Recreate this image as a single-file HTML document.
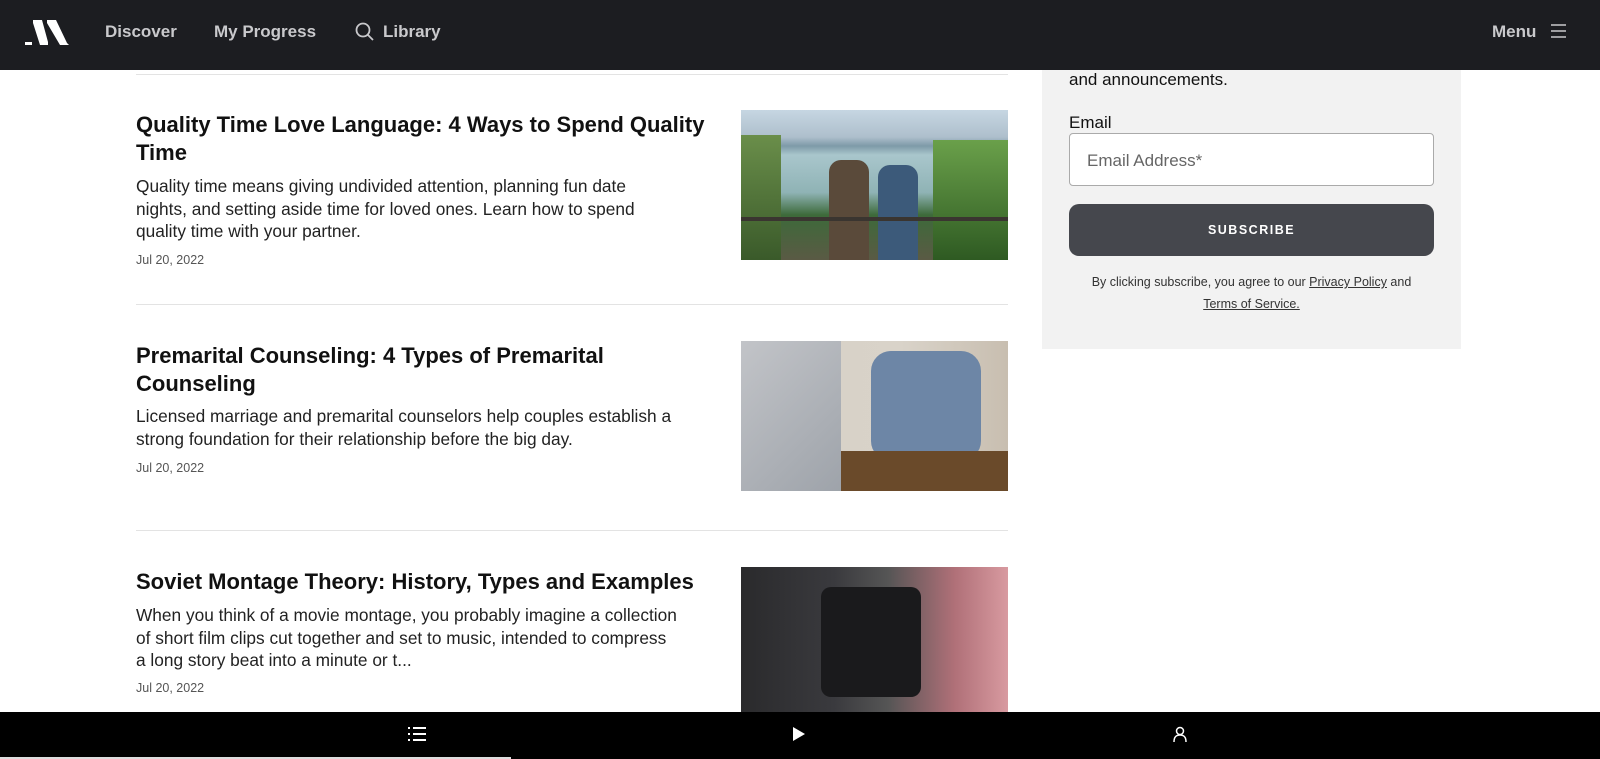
<!DOCTYPE html>
<html><head><meta charset="utf-8"><style>
*{margin:0;padding:0;box-sizing:border-box}
body{width:1600px;height:759px;overflow:hidden;background:#fff;font-family:"Liberation Sans",Arial,sans-serif;color:#191919;position:relative}
.hdr{position:absolute;top:0;left:0;width:1600px;height:70px;background:#1c1d21;color:#c9c9cc;font-weight:bold;font-size:17px}
.hdr span{position:absolute;top:22px}
.line{position:absolute;left:136px;width:872px;height:1px;background:#e3e3e3}
.t{position:absolute;left:136px;width:580px;font-size:22px;font-weight:bold;line-height:28px;color:#111}
.d{position:absolute;left:136px;width:575px;font-size:17.3px;line-height:22.5px;color:#222}
.dt{position:absolute;left:136px;font-size:12.5px;color:#555}
.img{position:absolute;left:741px;width:267px;height:150px}
.side{position:absolute;left:1042px;top:70px;width:419px;height:279px;background:#f2f2f2}
.bb{position:absolute;top:712px;left:0;width:1600px;height:47px;background:#000}
</style></head><body>
<div class="line" style="top:74px"></div>
<div class="t" style="top:111px">Quality Time Love Language: 4 Ways to Spend Quality Time</div>
<div class="d" style="top:175px;width:540px">Quality time means giving undivided attention, planning fun date nights, and setting aside time for loved ones. Learn how to spend quality time with your partner.</div>
<div class="dt" style="top:253px">Jul 20, 2022</div>
<div class="img" style="top:110px;background:linear-gradient(180deg,#c6d6e2 0%,#aebfcc 18%,#7e9aa8 24%,#a9c6cc 30%,#8fb3b5 55%,#3d6a3a 70%,#5a5a44 100%)">
<div style="position:absolute;left:0;top:25px;width:40px;height:125px;background:linear-gradient(#6a8e4a,#3a5a2a)"></div>
<div style="position:absolute;right:0;top:30px;width:75px;height:120px;background:linear-gradient(#6aa04a,#2e5a22)"></div>
<div style="position:absolute;left:88px;top:50px;width:40px;height:100px;background:#5a4a3a;border-radius:12px 12px 0 0"></div>
<div style="position:absolute;left:137px;top:55px;width:40px;height:95px;background:#3c5a7a;border-radius:12px 12px 0 0"></div>
<div style="position:absolute;left:0;top:107px;width:267px;height:4px;background:#3a3530"></div>
</div>
<div class="line" style="top:304px"></div>
<div class="t" style="top:342px">Premarital Counseling: 4 Types of Premarital Counseling</div>
<div class="d" style="top:405px">Licensed marriage and premarital counselors help couples establish a strong foundation for their relationship before the big day.</div>
<div class="dt" style="top:461px">Jul 20, 2022</div>
<div class="img" style="top:341px;background:linear-gradient(90deg,#b3a89a 0%,#d8d2c8 30%,#d9d3c9 60%,#c8beb0 100%)">
<div style="position:absolute;left:0;top:0;width:100px;height:150px;background:linear-gradient(135deg,#c2c4c8,#9ea3aa)"></div>
<div style="position:absolute;left:130px;top:10px;width:110px;height:110px;background:#6d86a6;border-radius:20px"></div>
<div style="position:absolute;left:100px;top:110px;width:167px;height:40px;background:#6a4a2a"></div>
</div>
<div class="line" style="top:530px"></div>
<div class="t" style="top:568px">Soviet Montage Theory: History, Types and Examples</div>
<div class="d" style="top:604px;width:575px">When you think of a movie montage, you probably imagine a collection<br>of short film clips cut together and set to music, intended to compress<br>a long story beat into a minute or t...</div>
<div class="dt" style="top:681px">Jul 20, 2022</div>
<div class="img" style="top:567px;height:145px;background:linear-gradient(90deg,#2a2a2c 0%,#3a3a3e 35%,#555 55%,#b07078 80%,#d89aa0 100%)">
<div style="position:absolute;left:80px;top:20px;width:100px;height:110px;background:#1a1a1c;border-radius:10px"></div>
</div>
<div class="side">
<div style="position:absolute;left:27px;top:0px;font-size:17px;color:#111">and announcements.</div>
<div style="position:absolute;left:27px;top:43px;font-size:17px;color:#111">Email</div>
<div style="position:absolute;left:27px;top:63px;width:365px;height:53px;background:#fff;border:1px solid #aaa;border-radius:4px;font-size:17px;color:#666;padding:17px 0 0 17px">Email Address*</div>
<div style="position:absolute;left:27px;top:134px;width:365px;height:52px;background:#45474d;border-radius:10px;color:#fff;font-weight:bold;font-size:12.5px;letter-spacing:1.5px;text-align:center;line-height:52px">SUBSCRIBE</div>
<div style="position:absolute;left:0;top:201px;width:419px;text-align:center;font-size:12.5px;line-height:22px;color:#333">By clicking subscribe, you agree to our <u>Privacy Policy</u> and<br><u>Terms of Service.</u></div>
</div>
<div class="hdr">
<svg style="position:absolute;left:25px;top:18px" width="46" height="28" viewBox="0 0 46 28"><rect x="0" y="24" width="7" height="3" fill="#fff"/><path d="M8 2h9l6 22v3h-8l-7-22z M22 2h9l11 23 2 2h-9l-13-22z" fill="#fff"/></svg>
<span style="left:105px">Discover</span>
<span style="left:214px">My Progress</span>
<svg style="position:absolute;left:355px;top:22px" width="20" height="20" viewBox="0 0 20 20"><circle cx="8" cy="8" r="6.5" fill="none" stroke="#c9c9cc" stroke-width="1.8"/><path d="M13 13l5 5" stroke="#c9c9cc" stroke-width="1.8"/></svg>
<span style="left:383px">Library</span>
<span style="left:1492px">Menu</span>
<svg style="position:absolute;left:1551px;top:24px" width="15" height="14"><path d="M0 1h15M0 7h15M0 13h15" stroke="#c9c9cc" stroke-width="1.5"/></svg>
</div>
<div class="bb">
<svg style="position:absolute;left:408px;top:15px" width="18" height="14"><path d="M0 1h2M0 7h2M0 13h2M5 1h13M5 7h13M5 13h13" stroke="#fff" stroke-width="2"/></svg>
<svg style="position:absolute;left:793px;top:15px" width="12" height="14"><path d="M0 0L12 7L0 14z" fill="#fff"/></svg>
<svg style="position:absolute;left:1172px;top:14px" width="16" height="16"><circle cx="8" cy="5" r="3.5" fill="none" stroke="#fff" stroke-width="1.5"/><path d="M2 16c0-5 2-7 6-7s6 2 6 7" fill="none" stroke="#fff" stroke-width="1.5"/></svg>
<div style="position:absolute;left:0;top:45px;width:511px;height:2px;background:#ddd"></div>
</div>
</body></html>
